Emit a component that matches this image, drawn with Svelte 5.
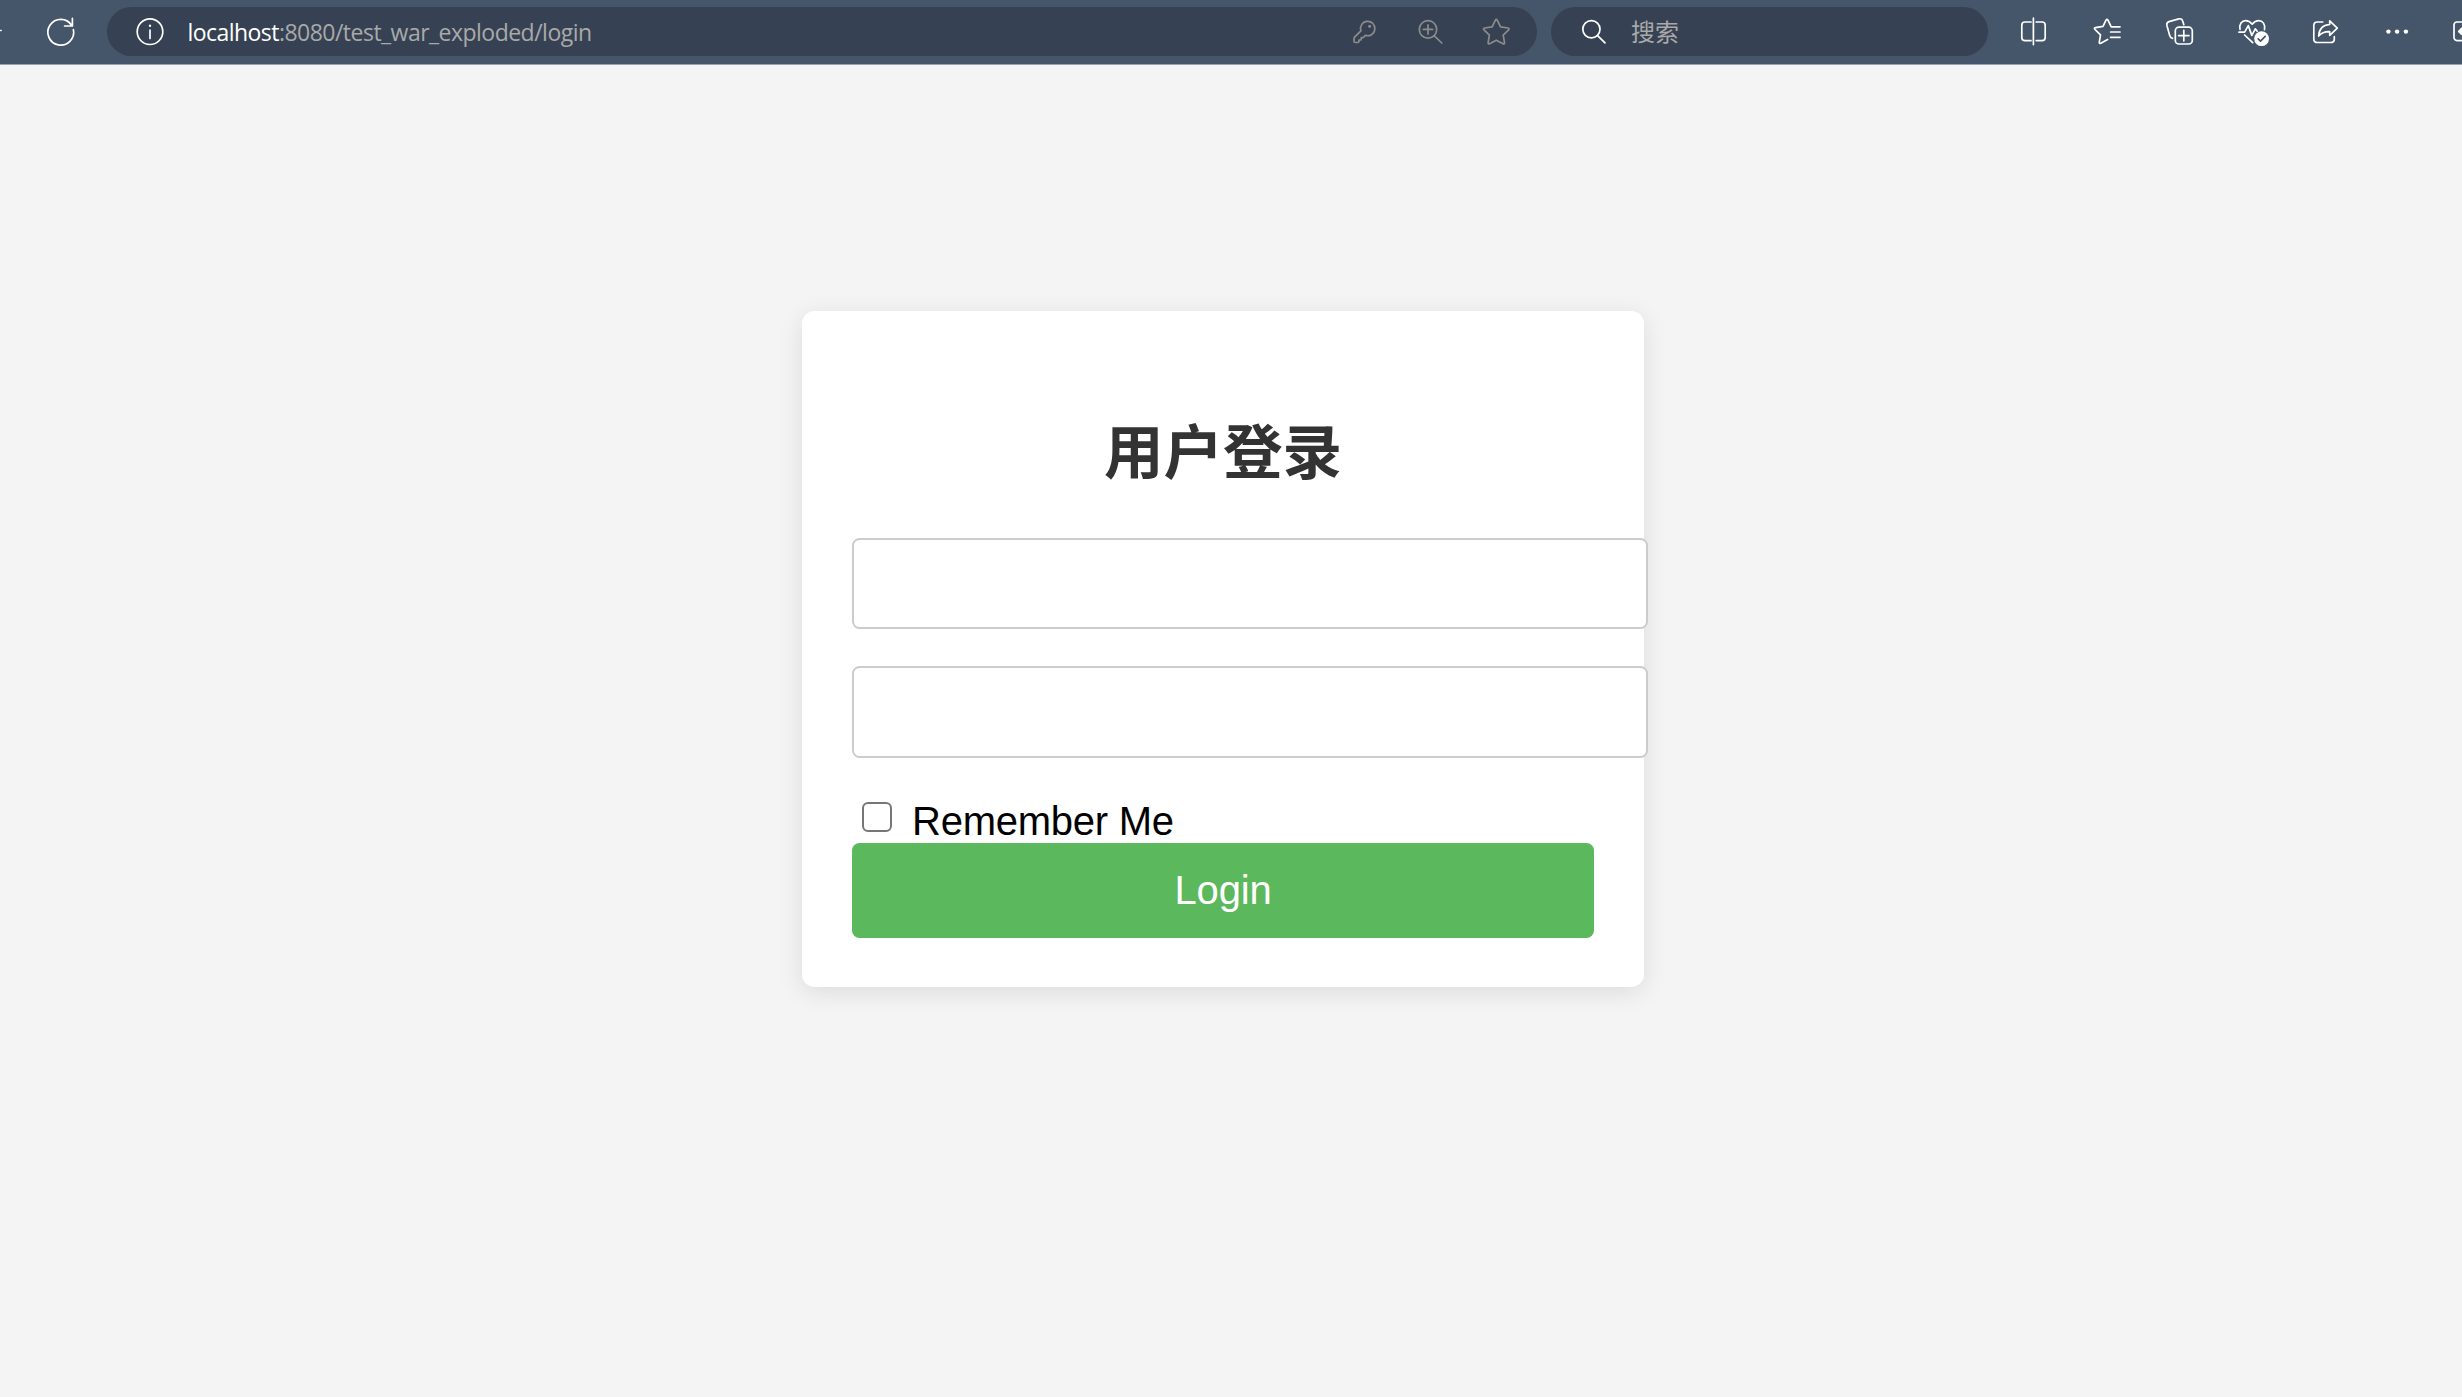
<script>
  let username = $state('');
  let password = $state('');
  let remember = $state(false);
</script>

<div class="window">
  <header class="toolbar">
    <div class="nav">
      <svg class="edge" viewBox="0 0 2 32"><path d="M0 14.5h1.2" /></svg>
      <svg class="icon" viewBox="0 0 32 32">
        <path d="M29.4 13.6A12.9 12.9 0 1 1 27.6 9.2M28.4 2.4V10H20.6" />
      </svg>
    </div>

    <div class="address">
      <svg class="icon" viewBox="0 0 32 32">
        <circle cx="16" cy="15.7" r="12.8" />
        <path d="M16 14v8.5" />
        <circle class="solid" cx="16" cy="9.8" r="1.2" />
      </svg>
      <div class="url"><span class="host">localhost</span><span class="path">:8080/test_war_exploded/login</span></div>
      <div class="tools">
        <svg class="icon" viewBox="0 0 32 32">
          <path d="M12.9 14.8L6.6 21.1Q6 21.7 6 22.6V25.2Q6 26.5 7.3 26.5H9.8Q11 26.5 11 25.3V24H12.2Q13.3 24 13.3 22.9V21.6H14.6Q15.4 21.6 15.9 21L17.3 19.3A7.2 7.2 0 1 0 12.9 14.8Z" />
          <circle class="solid" cx="21.6" cy="10.3" r="1.5" />
        </svg>
        <svg class="icon" viewBox="0 0 32 32">
          <circle cx="14" cy="13.4" r="8.7" />
          <path d="M20.3 19.8L27.8 27M14 8.8v9.2M9.4 13.4h9.2" />
        </svg>
        <svg class="icon" viewBox="0 0 32 32">
          <path d="M15.4 4.1Q16.3 2.6 17.2 4.1L20.5 10.9L28 12Q29.8 12.4 28.6 13.8L23.2 19.1L24.5 26.6Q24.6 28.4 23 27.7L16.3 24.2L9.6 27.7Q8 28.4 8.1 26.6L9.4 19.1L4 13.8Q2.8 12.4 4.6 12L12.1 10.9Z" />
        </svg>
      </div>
    </div>

    <div class="search">
      <svg class="icon" viewBox="0 0 32 32">
        <circle cx="13.4" cy="13.3" r="8.6" />
        <path d="M19.6 19.6L27 26.8" />
      </svg>
      <span>搜索</span>
    </div>

    <div class="actions">
      <svg class="icon" viewBox="0 0 32 32">
        <path d="M18.4 2.2V28.6M16 6H10Q6.8 6 6.8 9.2V21.4Q6.8 24.6 10 24.6H16M21.2 6H27Q30.2 6 30.2 9.2V21.4Q30.2 24.6 27 24.6H21.2" />
      </svg>
      <svg class="icon" viewBox="0 0 32 32">
        <path d="M32 10.8H23.2L20 4.2Q19 2.6 18 4.2L15 10.4L7.5 11.6Q5.7 12.1 7 13.5L12.5 18.9L11.3 26.2Q11.2 28 12.8 27.2L19.6 23.4M22.6 16H32M22.6 21.3H32" />
      </svg>
      <svg class="icon" viewBox="0 0 32 32">
        <rect x="14.3" y="11.2" width="17" height="16.8" rx="3.6" />
        <path d="M22.8 14.4V24.8M17.6 19.6H28M11.5 22.3Q9.3 21.8 8.7 19.5L5.9 9.5Q5.3 6.3 8 5.6L17.8 2.9Q21 2.2 21.7 5L22.8 8.7" />
      </svg>
      <svg class="icon" viewBox="0 0 32 32">
        <path d="M6 13.4C4.8 8.2 8 4.7 11.6 4.7C14.8 4.7 16.6 6.2 18.2 8.2C19.8 6.2 21.6 4.7 24.8 4.7C28.6 4.7 31.6 8.2 30.5 13.6M5 16.2H10.6L14.3 9.6L17.8 19.4L21.3 12.8L23.2 15.2M10.6 19L18.7 26.6" />
        <circle class="solid" cx="27.6" cy="22.7" r="7.4" />
        <path class="tick" d="M24.2 22.8L26.5 25.1L31.2 20.4" />
      </svg>
      <svg class="icon" viewBox="0 0 32 32">
        <path d="M15.7 6H10.4Q6.8 6 6.8 9.6V22.9Q6.8 26.5 10.4 26.5H23.7Q27.3 26.5 27.3 22.9V20.7M22.7 4.9L30.3 12.1L22.7 19.3V15.6C17.4 15.4 14.4 16.8 11.7 20C12 12.8 16.2 8.9 22.7 8.5Z" />
      </svg>
      <svg class="icon" viewBox="0 0 32 32">
        <g class="solid">
          <circle cx="8.4" cy="15.6" r="2.2" />
          <circle cx="17.1" cy="15.6" r="2.2" />
          <circle cx="25.9" cy="15.6" r="2.2" />
        </g>
      </svg>
      <svg class="icon" viewBox="0 0 32 32">
        <rect x="1" y="6" width="26" height="18.6" rx="3" />
        <path class="bold" d="M12 15.4H6.4M9 12.6L6.2 15.4L9 18.2" />
      </svg>
    </div>
  </header>

  <main>
    <form class="card" onsubmit={(e) => e.preventDefault()}>
      <h2>用户登录</h2>
      <input class="field" type="text" aria-label="username" bind:value={username} />
      <input class="field" type="password" aria-label="password" bind:value={password} />
      <label class="remember">
        <input type="checkbox" bind:checked={remember} />
        <span>Remember Me</span>
      </label>
      <button type="submit">Login</button>
    </form>
  </main>
</div>

<style>
  :global(body) {
    margin: 0;
    background: #f4f4f4;
    overflow: hidden;
  }

  .window {
    display: flex;
    flex-direction: column;
    width: 100vw;
    height: 100vh;
    overflow: hidden;
    background: #f4f4f4;
    font-family: 'Liberation Sans', Arial, 'Noto Sans CJK SC', sans-serif;
  }

  .toolbar {
    flex: none;
    display: flex;
    align-items: center;
    box-sizing: border-box;
    height: 65px;
    border-bottom: 1px solid #97a1ae;
    background: #45556a;
    color: #fff;
    overflow: hidden;
  }

  .nav {
    flex: none;
    display: flex;
    gap: 42px;
    width: 107px;
  }

  .edge {
    width: 2px;
    height: 32px;
  }

  .icon {
    flex: none;
    width: 32px;
    height: 32px;
    overflow: visible;
  }

  svg {
    display: block;
    fill: none;
    stroke: currentColor;
    stroke-width: 1.7;
    stroke-linecap: round;
    stroke-linejoin: round;
  }

  .solid {
    fill: currentColor;
    stroke: none;
  }

  .tick {
    stroke: #45556a;
  }

  .bold {
    stroke-width: 2.4;
  }

  .address,
  .search {
    flex: none;
    display: flex;
    align-items: center;
    box-sizing: border-box;
    height: 49px;
    margin-top: -1px;
    border-radius: 25px;
    background: #364253;
    padding: 1px 25px 0 27px;
  }

  .address {
    width: 1430px;
  }

  .url {
    flex: 1;
    display: flex;
    margin-left: 21.5px;
    font: 23px/32px 'Open Sans', 'Noto Sans', sans-serif;
    white-space: nowrap;
  }

  .host {
    letter-spacing: -0.55px;
  }

  .path {
    color: #a9a9a9;
    letter-spacing: -0.52px;
  }

  .tools {
    display: flex;
    gap: 34px;
    color: #8c8c8c;
  }

  .search {
    width: 437px;
    margin-left: 14px;
    gap: 21px;
    color: #fff;
  }

  .search span {
    margin-top: -2px;
    color: #a9a9a9;
    font: 24px/32px 'Noto Sans CJK SC', sans-serif;
  }

  .actions {
    display: flex;
    gap: 41px;
    margin-left: 27px;
  }

  main {
    flex: 1;
    display: flex;
    justify-content: center;
    align-items: flex-start;
    padding: 246px 16px 0 0;
  }

  .card {
    display: flex;
    flex-direction: column;
    box-sizing: border-box;
    width: 842px;
    height: 676px;
    padding: 50px;
    border-radius: 12.5px;
    background: #fff;
    box-shadow: 0 5px 25px rgba(0, 0, 0, 0.1);
  }

  h2 {
    margin: 42px 0 45px;
    color: #333;
    font: bold 59.5px/90px 'Noto Sans CJK SC', sans-serif;
    text-align: center;
  }

  .field {
    flex: none;
    box-sizing: border-box;
    width: 796px;
    height: 91px;
    margin: 0 0 37px;
    padding: 25px;
    border: 2px solid #ccc;
    border-radius: 7.5px;
    background: #fff;
    font-size: 33px;
    outline: none;
  }

  .field + .field {
    height: 92px;
  }

  .remember {
    display: flex;
    align-items: flex-start;
    height: 48px;
    color: #000;
    font-size: 40px;
    line-height: 46px;
  }

  .remember input {
    appearance: none;
    flex: none;
    box-sizing: border-box;
    width: 30px;
    height: 30px;
    margin: 7px 20px 0 10px;
    border: 2px solid #767676;
    border-radius: 6px;
    background: #fff;
  }

  .remember span {
    margin-top: 3px;
    letter-spacing: -0.25px;
  }

  button {
    flex: none;
    height: 95px;
    padding: 0 0 2px;
    border: 0;
    border-radius: 7.5px;
    background: #5cb85c;
    color: #fff;
    font: 40px/46px 'Liberation Sans', Arial, sans-serif;
    letter-spacing: -0.2px;
  }
</style>
